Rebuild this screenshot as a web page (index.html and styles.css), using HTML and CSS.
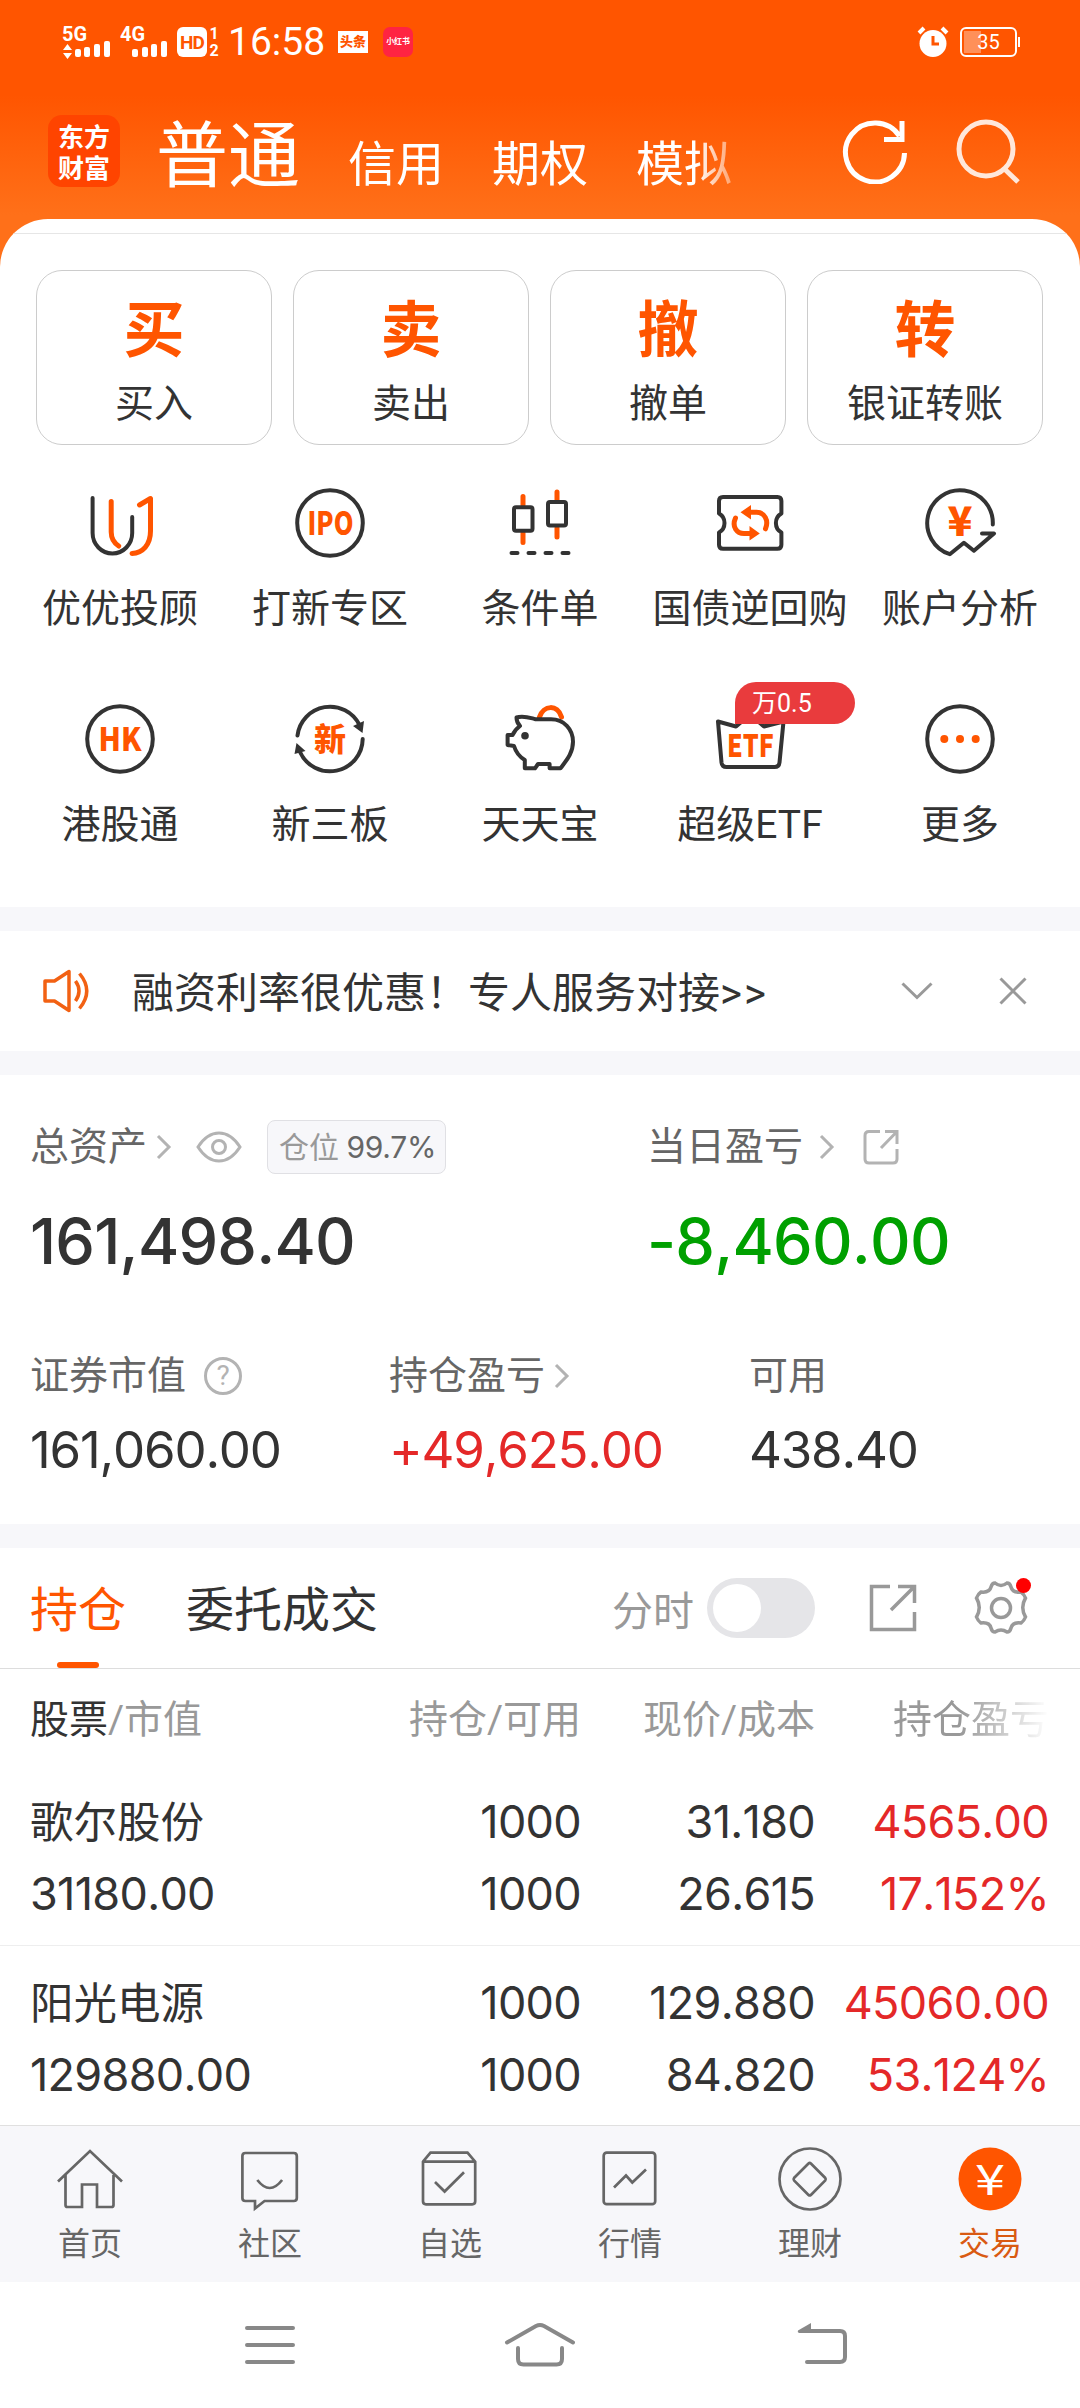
FILE: index.html
```html
<!DOCTYPE html>
<html lang="zh-CN">
<head>
    <meta charset="UTF-8">
    <meta name="viewport" content="width=device-width, initial-scale=1.0">
    <title>交易 - 东方财富</title>
    <link rel="stylesheet" href="styles.css">
</head>
<body>
    <header class="top">
        <div class="status-bar">
            <svg class="signal" width="50" height="44" viewBox="0 -6 50 44">
                <text x="0" y="15" font-size="20" font-weight="700" textLength="25" lengthAdjust="spacingAndGlyphs">5G</text>
                <path d="M1 24l4.500-6 4.500 6zM1 27l4.500 6 4.500-6z"/>
                <rect x="13" y="23" width="6" height="8" rx="2"/>
                <rect x="22" y="21" width="6" height="10" rx="2"/>
                <rect x="32" y="18" width="6" height="13" rx="2"/>
                <rect x="42" y="15" width="6" height="16" rx="2"/>
            </svg>
            <svg class="signal second" width="50" height="44" viewBox="0 -6 50 44">
                <text x="0" y="15" font-size="20" font-weight="700" textLength="25" lengthAdjust="spacingAndGlyphs">4G</text>
                <rect x="12" y="23" width="6" height="8" rx="2"/>
                <rect x="22" y="21" width="6" height="10" rx="2"/>
                <rect x="31" y="18" width="6" height="13" rx="2"/>
                <rect x="41" y="15" width="6" height="16" rx="2"/>
            </svg>
            <span class="hd">HD</span>
            <span class="sims"><i>1</i><i>2</i></span>
            <span class="time">16:58</span>
            <span class="toutiao">头条</span>
            <span class="xhs">小红书</span>
            <svg class="alarm" width="32" height="32" viewBox="0 0 32 32">
                <circle cx="16" cy="17.500" r="13.500"/>
                <path d="M2 7l5-5M30 7l-5-5" stroke="#fff" stroke-width="4"/>
                <path d="M16 10v8h6" stroke="#ff5500" stroke-width="3" fill="none"/>
            </svg>
            <span class="battery"><span class="level"></span>35</span>
        </div>
        <div class="title-bar">
            <div class="logo"><span>东方</span><span>财富</span></div>
            <nav class="accounts">
                <a class="current">普通</a>
                <a>信用</a>
                <a>期权</a>
                <a>模拟</a>
            </nav>
            <svg class="refresh" width="66" height="66" viewBox="0 0 66 66">
                <path d="M62.500 35A29.500 29.500 0 1 1 57.500 18M60 3v18.500H42"/>
            </svg>
            <svg class="search" width="66" height="66" viewBox="0 0 66 66">
                <circle cx="30" cy="31" r="27"/>
                <path d="M48.500 51L62 64"/>
            </svg>
        </div>
    </header>

    <section class="panel">
        <div class="trade-cards">
            <a class="card"><b>买</b><span>买入</span></a>
            <a class="card"><b>卖</b><span>卖出</span></a>
            <a class="card"><b>撤</b><span>撤单</span></a>
            <a class="card"><b>转</b><span>银证转账</span></a>
        </div>
        <div class="menu">
            <a class="menu-item">
                <svg viewBox="0 0 84 84">
                    <path class="dark" d="M14.600 17v35a19.800 20.500 0 0 0 39.600 0V36"/>
                    <path class="hot" d="M33.200 20.500V51q0 9 7.500 14M61.500 24l11-6.500V50c0 14-8 22-18.500 22.500"/>
                </svg>
                <span>优优投顾</span>
            </a>
            <a class="menu-item">
                <svg viewBox="0 0 84 84">
                    <circle class="dark" cx="42" cy="42" r="32.800"/>
                    <text x="19.500" y="53.500" font-size="32" textLength="46" lengthAdjust="spacingAndGlyphs">IPO</text>
                </svg>
                <span>打新专区</span>
            </a>
            <a class="menu-item">
                <svg viewBox="0 0 84 84">
                    <path class="hot" d="M25 15.500V24M25 52v9.500M59 11v8M59 47v9"/>
                    <rect class="dark" x="16" y="26.300" width="18.500" height="23.400" rx="2"/>
                    <rect class="dark" x="50" y="21" width="18" height="23.400" rx="2"/>
                    <path class="dark" d="M13.500 72h6M30.500 72h6M47.500 72h6M64.500 72h6"/>
                </svg>
                <span>条件单</span>
            </a>
            <a class="menu-item">
                <svg viewBox="0 0 84 84">
                    <path class="dark" d="M15 16h54.400q4 0 4 4v12.500q-5.500 3-5.500 9.500t5.500 9.500v12.200q0 4-4 4H15q-4 0-4-4V51.500q5.500-3 5.500-9.500T11 32.500V20q0-4 4-4z"/>
                    <path class="hot" d="M40 31.300h8.500c8 0 12.500 8 9 16.500M27.500 37c-4 9 1.500 15.500 8.500 15.500h7"/>
                    <path class="hot-fill" d="M32.500 31.300L43 24v14.500zM51.800 52.500L41.500 45v14.500z"/>
                </svg>
                <span>国债逆回购</span>
            </a>
            <a class="menu-item">
                <svg viewBox="0 0 84 84">
                    <path class="dark" d="M74.800 43.500A32.800 32.800 0 1 0 31.800 73.200L45.900 61.700l10 8L76 52.500H64"/>
                    <text x="29.500" y="54.500" font-size="41" textLength="25" lengthAdjust="spacingAndGlyphs">¥</text>
                </svg>
                <span>账户分析</span>
            </a>
            <a class="menu-item">
                <svg viewBox="0 0 84 84">
                    <circle class="dark" cx="42" cy="42" r="32.800"/>
                    <text x="20.500" y="53.500" font-size="32" textLength="43" lengthAdjust="spacingAndGlyphs">HK</text>
                </svg>
                <span>港股通</span>
            </a>
            <a class="menu-item">
                <svg viewBox="0 0 84 84">
                    <path class="dark" d="M9.500 38.500A32.800 32.800 0 0 1 71.500 28M74.700 42A32.800 32.800 0 0 1 12 55"/>
                    <path class="dark-fill" d="M74.500 36l-9.500-7 11-5zM8.500 46l9 8-11 3z"/>
                    <text x="26" y="53.500" font-size="32">新</text>
                </svg>
                <span>新三板</span>
            </a>
            <a class="menu-item">
                <svg viewBox="0 0 84 84">
                    <path class="hot" d="M41.500 20c4-12 18-13 22 0"/>
                    <path class="pig" d="M18.500 20.500c7-2.500 14 .5 19 1.700H53c13 0 22 10 22 22.500 0 11-6 18-12.500 26.600H51.600V67H40l-3 4.300H26.800V63c-5-3-9-8-10.800-14l-6.400-1V38h5c1.400-3.500 4-6.500 7.400-9-2-2-3.500-5.500-3.500-8.500z"/>
                    <circle class="dark-fill" cx="27" cy="38.700" r="3.800"/>
                </svg>
                <span>天天宝</span>
            </a>
            <a class="menu-item">
                <svg viewBox="0 0 84 84">
                    <path class="dark" d="M10 24.500l18 5 14-12 14 12 19.500-5L71.500 65.500q-.5 4.500-5 4.500h-48q-4.500 0-5-4.500z"/>
                    <text x="19" y="59.500" font-size="31" textLength="47" lengthAdjust="spacingAndGlyphs">ETF</text>
                </svg>
                <span>超级ETF</span>
                <em class="badge">万0.5</em>
            </a>
            <a class="menu-item">
                <svg viewBox="0 0 84 84">
                    <circle class="dark" cx="42" cy="42" r="32.800"/>
                    <circle class="hot-fill" cx="26.300" cy="42" r="4"/>
                    <circle class="hot-fill" cx="42" cy="42" r="4"/>
                    <circle class="hot-fill" cx="57.700" cy="42" r="4"/>
                </svg>
                <span>更多</span>
            </a>
        </div>
    </section>

    <section class="notice">
        <svg class="speaker" width="50" height="44" viewBox="0 0 50 44">
            <path d="M2 12h9.500L26 2.500v39L11.500 32H2zM32.500 12q7 10 0 20M36.500 4.500Q51 22 36.500 39.500"/>
        </svg>
        <p>融资利率很优惠！专人服务对接<span>&gt;&gt;</span></p>
        <svg class="down" width="34" height="20" viewBox="0 0 34 20"><path d="M2.500 2.500L17 16.500l14.500-14"/></svg>
        <svg class="close" width="30" height="30" viewBox="0 0 30 30"><path d="M2.500 2.500l25 25M27.500 2.500l-25 25"/></svg>
    </section>

    <section class="assets">
        <div class="main-row">
            <div class="total">
                <div class="label">
                    <span>总资产</span>
                    <svg class="arrow" width="18" height="26" viewBox="0 0 18 26"><path d="M3 2l11 11L3 24"/></svg>
                    <svg class="eye" width="46" height="32" viewBox="0 0 46 32">
                        <path d="M2 16Q11 2 23 2t21 14Q35 30 23 30T2 16z"/>
                        <circle cx="23" cy="16" r="6.500"/>
                    </svg>
                    <span class="position">仓位 <b>99.7%</b></span>
                </div>
                <div class="big">161,498.40</div>
            </div>
            <div class="today">
                <div class="label">
                    <span>当日盈亏</span>
                    <svg class="arrow wide" width="18" height="26" viewBox="0 0 18 26"><path d="M3 2l11 11L3 24"/></svg>
                    <svg class="share" width="36" height="36" viewBox="0 0 36 36">
                        <path d="M17 2.500H6q-4 0-4 4V30q0 4 4 4h24q4 0 4-4V20M22 2.500h12V15M34 2.500L18 19"/>
                    </svg>
                </div>
                <div class="big down-green">-8,460.00</div>
            </div>
        </div>
        <div class="sub-row">
            <div>
                <div class="label">
                    <span>证券市值</span>
                    <span class="help">?</span>
                </div>
                <div class="value">161,060.00</div>
            </div>
            <div>
                <div class="label">
                    <span>持仓盈亏</span>
                    <svg class="arrow" width="18" height="26" viewBox="0 0 18 26"><path d="M3 2l11 11L3 24"/></svg>
                </div>
                <div class="value up">+49,625.00</div>
            </div>
            <div>
                <div class="label"><span>可用</span></div>
                <div class="value">438.40</div>
            </div>
        </div>
    </section>

    <section class="holdings">
        <div class="tabs">
            <a class="tab active">持仓</a>
            <a class="tab">委托成交</a>
            <span class="minute">分时</span>
            <span class="switch"></span>
            <svg class="export" width="50" height="50" viewBox="0 0 50 50">
                <path d="M22 3.500H3.500V46.500H46.500V29M30 3.500h16.500V20M46.500 3.500L23 27"/>
            </svg>
            <span class="settings">
                <svg width="58" height="58" viewBox="0 0 58 58">
                    <path d="M19 8q1-4 4-4 6 5 12 0 3 0 4 4 1.500 6 10 5 3 2 4.500 6-5.500 9.500 0 19-1.500 4-4.500 6-8.500-1-10 5-1 4-4 4-6-4-12 0-3 0-4-4-1.500-6-10-5-3-2-4.500-6 5.500-9.500 0-19Q6 15 9 13q8.500 1 10-5z"/>
                    <circle cx="29" cy="29" r="9.500"/>
                </svg>
            </span>
        </div>
        <div class="row head">
            <div><b>股票</b>/市值</div>
            <div>持仓/可用</div>
            <div>现价/成本</div>
            <div class="fade">持仓盈亏</div>
        </div>
        <div class="row">
            <div><span class="name">歌尔股份</span><span>31180.00</span></div>
            <div><span>1000</span><span>1000</span></div>
            <div><span>31.180</span><span>26.615</span></div>
            <div class="up"><span>4565.00</span><span>17.152%</span></div>
        </div>
        <div class="row">
            <div><span class="name">阳光电源</span><span>129880.00</span></div>
            <div><span>1000</span><span>1000</span></div>
            <div><span>129.880</span><span>84.820</span></div>
            <div class="up"><span>45060.00</span><span>53.124%</span></div>
        </div>
    </section>

    <nav class="bottom-nav">
        <a>
            <svg viewBox="0 0 72 72"><path d="M4 38.500L36 8l32 30.500M11.500 32v30q0 2 2 2H28V41.500h15V64h14.500q2 0 2-2V32"/></svg>
            <span>首页</span>
        </a>
        <a>
            <svg viewBox="0 0 72 72"><path d="M11.400 10h48.400q3 0 3 3v42q0 3-3 3H30.500L21 65.500V58h-9.600q-3 0-3-3V13q0-3 3-3zM23.300 37q12.400 16 24.800 0"/></svg>
            <span>社区</span>
        </a>
        <a>
            <svg viewBox="0 0 72 72"><path d="M9 18.700l7.500-9h37l7.700 9v39.600q0 3-3 3H12q-3 0-3-3zM9 18.700h52M21 39l9.600 9.500L50 29.300"/></svg>
            <span>自选</span>
        </a>
        <a>
            <svg viewBox="0 0 72 72"><rect x="9.700" y="9.700" width="51.500" height="51.500" rx="3"/><path d="M20 44.500l12-12 6.300 7L52 26.500"/></svg>
            <span>行情</span>
        </a>
        <a>
            <svg viewBox="0 0 72 72"><circle cx="36" cy="36" r="30.500"/><path d="M34.500 20.500L20 35q-1 1.200 0 2.400l14.500 14.500q1.200 1 2.400 0L51.300 37.400q1-1.200 0-2.400L36.900 20.500q-1.200-1-2.400 0z"/></svg>
            <span>理财</span>
        </a>
        <a class="active">
            <svg viewBox="0 0 72 72"><circle class="coin" cx="36" cy="36" r="31.500"/><text x="21" y="52" font-size="42" textLength="30" lengthAdjust="spacingAndGlyphs">¥</text></svg>
            <span>交易</span>
        </a>
    </nav>

    <div class="system-nav">
        <svg width="74" height="48" viewBox="0 0 74 48"><path d="M14 8h46M14 25h46M14 42h46"/></svg>
        <svg width="74" height="48" viewBox="0 0 74 48"><path d="M4 22.500L33 6q4-2 8 0l29 16.500M15 28v11q0 5.500 5.500 5.500h33q5.500 0 5.500-5.500V28"/></svg>
        <svg width="74" height="48" viewBox="0 0 74 48"><path d="M38 11h29q5 0 5 5v21q0 5-5 5H34"/><path class="solid" d="M25 10.500L38 3v10H26q-2-1-1-2.500z"/></svg>
    </div>
</body>
</html>
```

FILE: styles.css
```css
* {
    box-sizing: border-box;
}
body {
    margin: 0;
    width: 1080px;
    background-color: #f7f7fa;
    font-family: Roboto, "Noto Sans CJK SC", sans-serif;
    color: #333;
}
svg {
    display: block;
    flex: none;
    fill: none;
}
i, em {
    font-style: normal;
}

/* Orange header */
.top {
    height: 267px;
    background: linear-gradient(#ff5500 95px, #ff7019 215px);
    color: #fff;
}
.status-bar {
    display: flex;
    align-items: center;
    height: 84px;
    padding-left: 62px;
}
.signal {
    fill: #fff;
}
.signal.second {
    margin-left: 8px;
}
.hd {
    width: 30px;
    height: 30px;
    margin-left: 7px;
    border-radius: 6px;
    background-color: #fff;
    color: #ff5500;
    font-size: 19px;
    font-weight: 700;
    line-height: 31px;
    text-align: center;
    letter-spacing: -1px;
}
.sims {
    display: flex;
    flex-direction: column;
    width: 10px;
    margin-left: 2px;
    font-size: 16px;
    font-weight: 700;
    line-height: 17px;
    text-align: center;
}
.time {
    margin-left: 9px;
    font-size: 39px;
    line-height: 40px;
}
.toutiao {
    width: 30px;
    height: 22px;
    margin-left: 13px;
    background-color: #fff;
    color: #ff5500;
    font-size: 13px;
    font-weight: 900;
    line-height: 21px;
    text-align: center;
}
.xhs {
    width: 30px;
    height: 30px;
    margin-left: 15px;
    border-radius: 7px;
    background-color: #ff2442;
    font-size: 8px;
    font-weight: 700;
    line-height: 30px;
    text-align: center;
}
.alarm {
    margin-left: auto;
    fill: #fff;
}
.battery {
    position: relative;
    width: 57px;
    height: 30px;
    margin: 0 63px 0 11px;
    border: 2px solid #fff;
    border-radius: 6px;
    font-size: 20px;
    line-height: 27px;
    text-align: center;
}
.battery::after {
    content: "";
    position: absolute;
    right: -5px;
    top: 8px;
    width: 2px;
    height: 10px;
    background-color: #fff;
}
.level {
    position: absolute;
    left: 2px;
    top: 2px;
    width: 17px;
    height: 22px;
    background-color: rgba(255,255,255,0.35);
}
.title-bar {
    display: flex;
    align-items: center;
    height: 135px;
    padding: 0 58px 2px 48px;
}
.logo {
    display: flex;
    flex-direction: column;
    justify-content: center;
    width: 72px;
    height: 72px;
    border-radius: 14px;
    background-color: #ff4400;
    font-family: "Noto Sans CJK SC", sans-serif;
    font-size: 26px;
    font-weight: 700;
    line-height: 31px;
    text-align: center;
}
.accounts {
    display: flex;
    align-items: baseline;
    gap: 48px;
    margin: -3px auto 0 36px;
    font-size: 48px;
    -webkit-mask-image: linear-gradient(90deg, #000 540px, transparent 600px);
    mask-image: linear-gradient(90deg, #000 540px, transparent 600px);
}
.accounts .current {
    font-size: 72px;
}
.refresh, .search {
    stroke: #fff;
    stroke-width: 5;
}
.search {
    margin-left: 48px;
    opacity: 0.85;
}

/* Trade entrances */
.panel {
    height: 688px;
    margin-top: -48px;
    padding-top: 14px;
    border-radius: 48px 48px 0 0;
    background-color: #fff;
    overflow: hidden;
}
.trade-cards {
    display: grid;
    grid-template-columns: repeat(4, 236px);
    gap: 21px;
    padding: 36px 36px 0;
    border-top: 1px solid #e6e6e6;
}
.card {
    display: flex;
    flex-direction: column;
    align-items: center;
    height: 175px;
    padding-top: 26px;
    border: 1px solid #ccc;
    border-radius: 26px;
}
.card b {
    color: #ff5500;
    font-size: 61px;
    line-height: 68px;
}
.card span {
    margin-top: 13px;
    font-size: 39px;
    line-height: 52px;
}
.menu {
    display: grid;
    grid-template-columns: repeat(5, 210px);
    grid-auto-rows: 216px;
    padding: 36px 15px 0;
}
.menu-item {
    position: relative;
    display: flex;
    flex-direction: column;
    align-items: center;
    white-space: nowrap;
    font-size: 39px;
    line-height: 52px;
}
.menu-item svg {
    width: 84px;
    height: 84px;
    margin-bottom: 18px;
}
.menu-item text {
    fill: #ff5500;
    font-family: "Noto Sans CJK SC", sans-serif;
    font-weight: 900;
}
.dark, .pig {
    stroke: #333;
    stroke-width: 4;
    stroke-linecap: round;
    stroke-linejoin: round;
}
.pig {
    fill: #fff;
}
.hot {
    stroke: #ff5500;
    stroke-width: 5;
    stroke-linecap: round;
    stroke-linejoin: round;
}
.dark-fill {
    fill: #333;
}
.hot-fill {
    fill: #ff5500;
}
.badge {
    position: absolute;
    left: 90px;
    top: -15px;
    width: 120px;
    height: 42px;
    padding-left: 17px;
    border-radius: 21px 21px 21px 0;
    background-color: #e93b3d;
    color: #fff;
    font-size: 25px;
    line-height: 43px;
}

/* Notice */
.notice {
    display: flex;
    align-items: center;
    height: 120px;
    margin: 24px 0;
    padding: 0 52px 0 42px;
    background-color: #fff;
}
.notice svg {
    stroke: #999;
    stroke-width: 3;
}
.notice .speaker {
    margin-left: 1px;
    stroke: #f26113;
    stroke-width: 3.500;
    stroke-linejoin: round;
}
.notice p {
    flex: 1;
    margin: -3px 0 0 39px;
    font-size: 42px;
}
.notice p span {
    letter-spacing: 2px;
}
.close {
    margin-left: 64px;
}

/* Assets */
.assets {
    height: 449px;
    padding: 45px 30px 0;
    background-color: #fff;
}
.main-row, .sub-row {
    display: grid;
}
.main-row {
    grid-template-columns: 617px 1fr;
}
.sub-row {
    grid-template-columns: 359px 360px 1fr;
    margin-top: 70px;
}
.label {
    display: flex;
    align-items: center;
    height: 54px;
    color: #666;
    font-size: 39px;
    line-height: 54px;
    white-space: nowrap;
}
.label svg {
    stroke: #b3b3b3;
    stroke-width: 3;
}
.arrow {
    margin-left: 8px;
}
.arrow.wide {
    margin-left: 15px;
}
.eye {
    margin-left: 23px;
}
.share {
    margin-left: 27px;
}
.position {
    height: 54px;
    margin-left: 25px;
    padding: 0 9px 0 11px;
    border: 1px solid #e0e0e4;
    border-radius: 8px;
    background-color: #f7f7fa;
    color: #999;
    font-size: 30px;
    line-height: 53px;
}
.position b {
    color: #666;
    font-family: Inter, sans-serif;
    font-size: 30px;
    font-weight: 400;
    letter-spacing: -0.3px;
}
.big {
    margin-top: 29px;
    font-family: Inter, sans-serif;
    font-size: 63px;
    font-weight: 500;
    line-height: 76px;
    font-kerning: none;
    letter-spacing: -0.8px;
}
.down-green {
    color: #00a000;
}
.value {
    margin-top: 17px;
    font-family: Inter, sans-serif;
    font-size: 51px;
    line-height: 60px;
    font-kerning: none;
    letter-spacing: -1.2px;
}
.up {
    color: #e42828;
}
.help {
    width: 38px;
    height: 38px;
    margin-left: 18px;
    border: 3px solid #b3b3b3;
    border-radius: 50%;
    color: #b3b3b3;
    font-size: 28px;
    line-height: 32px;
    text-align: center;
}

/* Holdings */
.holdings {
    height: 577px;
    margin-top: 24px;
    background-color: #fff;
}
.tabs {
    display: flex;
    align-items: center;
    height: 121px;
    padding: 0 50px 0 30px;
    border-bottom: 1px solid #ddd;
}
.tab {
    position: relative;
    height: 120px;
    margin-right: 60px;
    font-size: 48px;
    line-height: 125px;
}
.tab.active {
    color: #ff5500;
}
.tab.active::after {
    content: "";
    position: absolute;
    left: 27px;
    bottom: 0;
    width: 42px;
    height: 6px;
    border-radius: 3px;
    background-color: #ff5500;
}
.minute {
    margin-left: auto;
    color: #999;
    font-size: 41px;
}
.switch {
    width: 108px;
    height: 60px;
    margin: 0 53px 0 13px;
    padding: 6px;
    border-radius: 30px;
    background-color: #e5e5e8;
}
.switch::before {
    content: "";
    display: block;
    width: 48px;
    height: 48px;
    border-radius: 50%;
    background-color: #fff;
}
.export, .settings {
    stroke: #999;
    stroke-width: 3.500;
}
.settings {
    position: relative;
    margin-left: 54px;
}
.settings::after {
    content: "";
    position: absolute;
    left: 44px;
    top: -1px;
    width: 15px;
    height: 15px;
    border-radius: 50%;
    background-color: #ff0000;
}
.row {
    display: grid;
    grid-template-columns: 351px 200px 234px 234px;
    height: 181px;
    padding: 21px 30px 0;
    border-bottom: 1px solid #eee;
    font-family: Inter, "Noto Sans CJK SC", sans-serif;
    font-size: 45px;
    line-height: 72px;
    font-kerning: none;
    letter-spacing: -0.7px;
    white-space: nowrap;
}
.row:last-child {
    border-bottom: 0;
}
.row div + div {
    text-align: right;
}
.row div > span {
    display: block;
}
.row .name {
    font-size: 43.500px;
    letter-spacing: 0;
}
.row.head {
    height: 96px;
    padding-top: 15px;
    border-bottom: 0;
    color: #999;
    font-family: Roboto, "Noto Sans CJK SC", sans-serif;
    font-size: 39px;
    letter-spacing: 0;
}
.head b {
    color: #333;
    font-weight: 400;
}
.fade {
    -webkit-mask-image: linear-gradient(90deg, #000 145px, transparent 234px);
    mask-image: linear-gradient(90deg, #000 145px, transparent 234px);
}

/* Bottom bars */
.bottom-nav {
    display: grid;
    grid-template-columns: repeat(6, 1fr);
    height: 157px;
    border-top: 1px solid #e0e0e0;
    background-color: #f7f7fa;
}
.bottom-nav a {
    display: flex;
    flex-direction: column;
    align-items: center;
    padding-top: 17px;
    color: #666;
    font-size: 32px;
    line-height: 44px;
}
.bottom-nav svg {
    width: 72px;
    height: 72px;
    margin-bottom: 7px;
    stroke: #666;
    stroke-width: 2.700;
}
.bottom-nav .active {
    color: #d95a12;
}
.bottom-nav .coin {
    fill: #ff5500;
    stroke: none;
}
.bottom-nav text {
    fill: #fff;
    stroke: none;
    font-family: "Noto Sans CJK SC", sans-serif;
    font-weight: 400;
}
.system-nav {
    display: flex;
    justify-content: center;
    gap: 196px;
    height: 126px;
    padding-top: 38px;
    background-color: #fff;
}
.system-nav svg {
    stroke: #888;
    stroke-width: 4;
    stroke-linecap: round;
}
.system-nav .solid {
    fill: #888;
    stroke: none;
}
```
